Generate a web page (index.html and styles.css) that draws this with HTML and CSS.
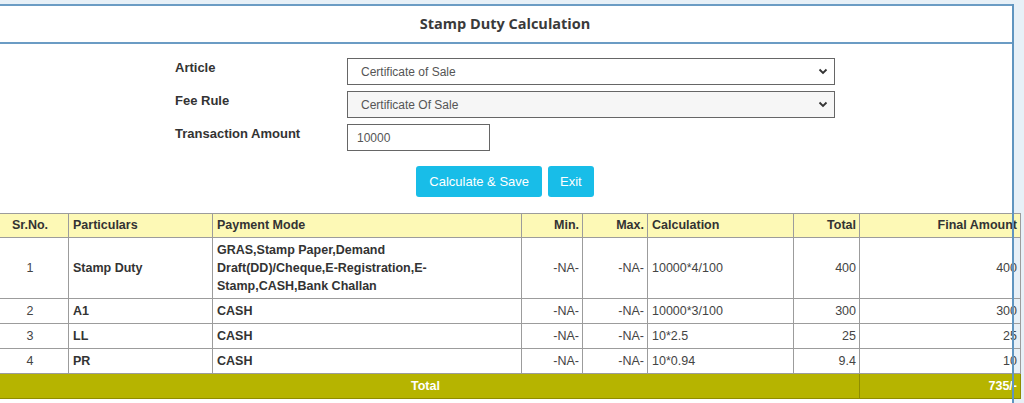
FILE: index.html
```html
<!DOCTYPE html>
<html lang="en">
<head>
<meta charset="utf-8">
<title>Stamp Duty Calculation</title>
<link rel="stylesheet" href="styles.css">
</head>
<body>
<div class="panel">
  <div class="panel-head">Stamp Duty Calculation</div>
  <div class="form">
    <label class="lbl">Article</label>
    <div class="select-wrap">
      <select class="ctl sel"><option>Certificate of Sale</option></select>
      <svg class="chev" width="10" height="7" viewBox="0 0 10 7"><path d="M1.5 1.5 L5 5 L8.5 1.5" fill="none" stroke="#333" stroke-width="1.8"/></svg>
    </div>
    <label class="lbl">Fee Rule</label>
    <div class="select-wrap">
      <select class="ctl sel sel-grey"><option>Certificate Of Sale</option></select>
      <svg class="chev" width="10" height="7" viewBox="0 0 10 7"><path d="M1.5 1.5 L5 5 L8.5 1.5" fill="none" stroke="#333" stroke-width="1.8"/></svg>
    </div>
    <label class="lbl">Transaction Amount</label>
    <div><input class="ctl amt" type="text" value="10000"></div>
  </div>
  <div class="actions">
    <button class="btn btn-calc">Calculate &amp; Save</button>
    <button class="btn">Exit</button>
  </div>
  <table class="grid">
    <colgroup>
      <col class="c-sr"><col class="c-part"><col class="c-mode"><col class="c-min"><col class="c-max"><col class="c-calc"><col class="c-tot"><col class="c-fin">
    </colgroup>
    <thead>
      <tr>
        <th class="ctr">Sr.No.</th>
        <th>Particulars</th>
        <th>Payment Mode</th>
        <th class="r">Min.</th>
        <th class="r">Max.</th>
        <th>Calculation</th>
        <th class="r">Total</th>
        <th class="r">Final Amount</th>
      </tr>
    </thead>
    <tbody>
      <tr>
        <td class="ctr">1</td>
        <td class="b">Stamp Duty</td>
        <td class="b">GRAS,Stamp Paper,Demand<br>Draft(DD)/Cheque,E-Registration,E-<br>Stamp,CASH,Bank Challan</td>
        <td class="r">-NA-</td>
        <td class="r">-NA-</td>
        <td>10000*4/100</td>
        <td class="r">400</td>
        <td class="r">400</td>
      </tr>
      <tr>
        <td class="ctr">2</td>
        <td class="b">A1</td>
        <td class="b">CASH</td>
        <td class="r">-NA-</td>
        <td class="r">-NA-</td>
        <td>10000*3/100</td>
        <td class="r">300</td>
        <td class="r">300</td>
      </tr>
      <tr>
        <td class="ctr">3</td>
        <td class="b">LL</td>
        <td class="b">CASH</td>
        <td class="r">-NA-</td>
        <td class="r">-NA-</td>
        <td>10*2.5</td>
        <td class="r">25</td>
        <td class="r">25</td>
      </tr>
      <tr>
        <td class="ctr">4</td>
        <td class="b">PR</td>
        <td class="b">CASH</td>
        <td class="r">-NA-</td>
        <td class="r">-NA-</td>
        <td>10*0.94</td>
        <td class="r">9.4</td>
        <td class="r">10</td>
      </tr>
    </tbody>
    <tfoot>
      <tr>
        <td class="ctr" colspan="7">Total</td>
        <td class="r">735/-</td>
      </tr>
    </tfoot>
  </table>
</div>
</body>
</html>
```
FILE: styles.css
```css
html, body {
  margin: 0;
  padding: 0;
}
body {
  background: #e7f0f7;
  font-family: "Liberation Sans", Arial, sans-serif;
  color: #333;
  overflow: hidden;
  height: 403px;
}
.panel {
  position: relative;
  margin: 4px 0 0 -4px;
  width: 1018px;
  box-sizing: border-box;
  background: #fff;
  border-top: 2px solid #6b9cc4;
  padding-bottom: 40px;
}
.panel::after {
  content: "";
  position: absolute;
  top: -2px;
  right: 0;
  bottom: 0;
  width: 2px;
  background: #5f95c0;
  z-index: 3;
}
.panel-head {
  height: 36px;
  line-height: 35px;
  border-bottom: 2px solid #6b9cc4;
  text-align: center;
  font-family: "Open Sans", sans-serif;
  font-weight: 700;
  font-size: 14.5px;
  color: #3a3a3a;
}
.form {
  display: grid;
  grid-template-columns: 172px 488px;
  row-gap: 6px;
  justify-content: center;
  padding-top: 14px;
}
.lbl {
  font-size: 13px;
  font-weight: 700;
  line-height: 16px;
  padding-top: 2px;
  color: #333;
}
.select-wrap {
  position: relative;
}
.ctl {
  box-sizing: border-box;
  height: 27px;
  border: 1px solid #666;
  border-radius: 0;
  font-family: "Liberation Sans", Arial, sans-serif;
  font-size: 12px;
  color: #555;
  background: #fff;
  margin: 0;
  outline: none;
}
.sel {
  width: 488px;
  appearance: none;
  -webkit-appearance: none;
  padding: 0 30px 0 13px;
}
.sel-grey {
  background: #f6f6f6;
}
.chev {
  position: absolute;
  right: 7px;
  top: 10px;
  pointer-events: none;
}
.amt {
  width: 143px;
  padding: 0 9px;
}
.actions {
  display: flex;
  justify-content: center;
  gap: 6px;
  margin-top: 15px;
}
.btn {
  height: 31px;
  padding: 0 12px;
  border: 0;
  border-radius: 3px;
  background: #18bde8;
  color: #fff;
  font-family: "Liberation Sans", Arial, sans-serif;
  font-size: 13px;
}
.btn-calc {
  padding: 0 13px;
}
.grid {
  margin-top: 16px;
  margin-left: -6px;
  width: 1030px;
  table-layout: fixed;
  border-collapse: collapse;
  font-size: 12.5px;
}
.c-sr { width: 78px; }
.c-part { width: 144px; }
.c-mode { width: 309px; }
.c-min { width: 61px; }
.c-max { width: 65px; }
.c-calc { width: 146px; }
.c-tot { width: 66px; }
.c-fin { width: 161px; }
.grid th,
.grid td {
  border: 1px solid #9c9c9c;
  padding: 3px 3px 3px 4px;
  line-height: 18px;
  text-align: left;
  vertical-align: middle;
}
.grid th {
  background: #fdf9b6;
  font-weight: 700;
  color: #333;
  padding-top: 2px;
  padding-bottom: 3px;
}
.grid td {
  color: #444;
}
.grid td.b {
  font-weight: 700;
  color: #333;
}
.grid .r { text-align: right; }
.grid .ctr { text-align: center; }
.grid tfoot td {
  background: #b6b400;
  color: #fff;
  font-weight: 700;
  border-color: #8f8d00;
}
```
